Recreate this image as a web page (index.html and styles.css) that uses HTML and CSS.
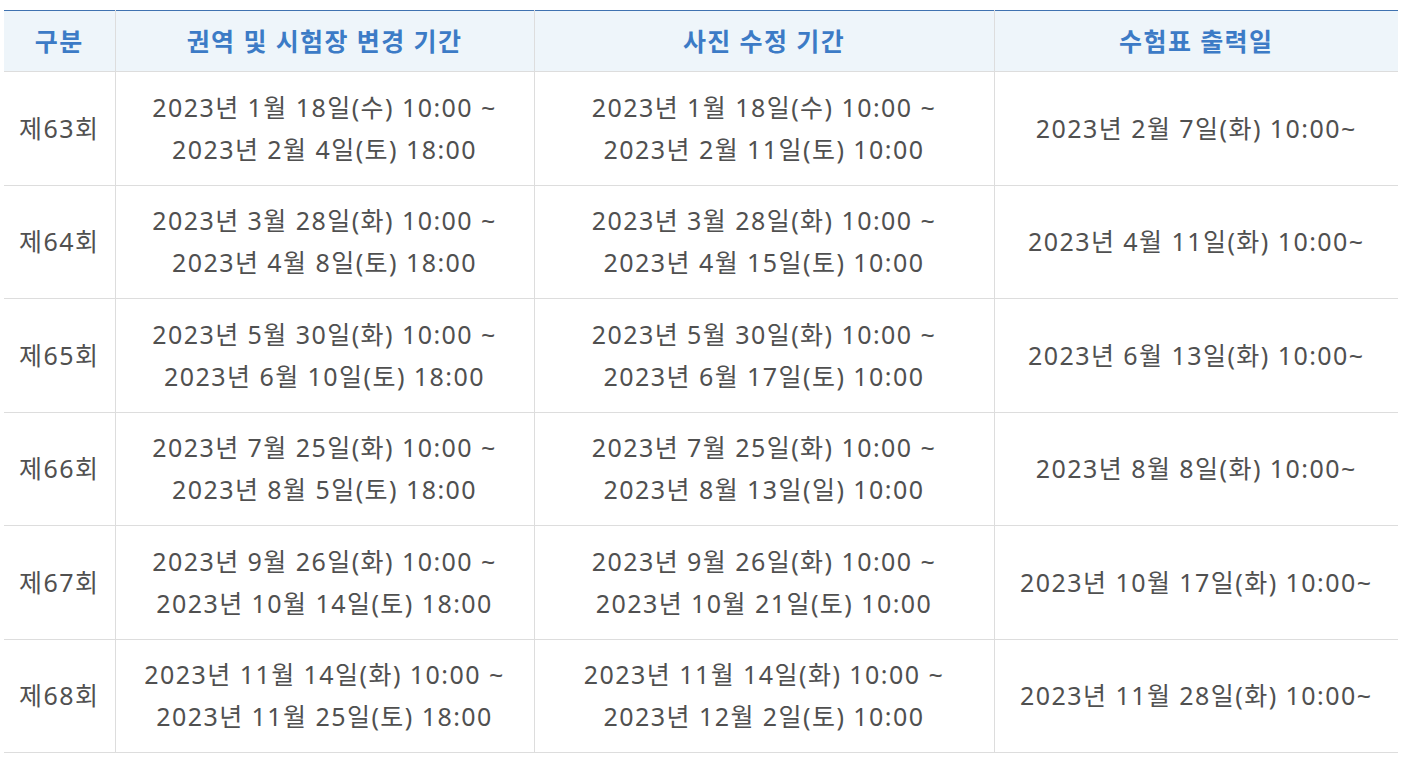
FILE: index.html
```html
<!DOCTYPE html>
<html lang="ko">
<head>
<meta charset="utf-8">
<title>시험 일정</title>
<link rel="stylesheet" href="styles.css">
</head>
<body>
<div class="wrap">
<table class="sched">
<colgroup>
<col class="c1"><col class="c2"><col class="c3"><col class="c4">
</colgroup>
<thead>
<tr><th>구분</th><th>권역 및 시험장 변경 기간</th><th>사진 수정 기간</th><th>수험표 출력일</th></tr>
</thead>
<tbody>
<tr><td>제63회</td><td>2023년 1월 18일(수) 10:00 ~<br>2023년 2월 4일(토) 18:00</td><td>2023년 1월 18일(수) 10:00 ~<br>2023년 2월 11일(토) 10:00</td><td>2023년 2월 7일(화) 10:00~</td></tr>
<tr><td>제64회</td><td>2023년 3월 28일(화) 10:00 ~<br>2023년 4월 8일(토) 18:00</td><td>2023년 3월 28일(화) 10:00 ~<br>2023년 4월 15일(토) 10:00</td><td>2023년 4월 11일(화) 10:00~</td></tr>
<tr><td>제65회</td><td>2023년 5월 30일(화) 10:00 ~<br>2023년 6월 10일(토) 18:00</td><td>2023년 5월 30일(화) 10:00 ~<br>2023년 6월 17일(토) 10:00</td><td>2023년 6월 13일(화) 10:00~</td></tr>
<tr><td>제66회</td><td>2023년 7월 25일(화) 10:00 ~<br>2023년 8월 5일(토) 18:00</td><td>2023년 7월 25일(화) 10:00 ~<br>2023년 8월 13일(일) 10:00</td><td>2023년 8월 8일(화) 10:00~</td></tr>
<tr><td>제67회</td><td>2023년 9월 26일(화) 10:00 ~<br>2023년 10월 14일(토) 18:00</td><td>2023년 9월 26일(화) 10:00 ~<br>2023년 10월 21일(토) 10:00</td><td>2023년 10월 17일(화) 10:00~</td></tr>
<tr><td>제68회</td><td>2023년 11월 14일(화) 10:00 ~<br>2023년 11월 25일(토) 18:00</td><td>2023년 11월 14일(화) 10:00 ~<br>2023년 12월 2일(토) 10:00</td><td>2023년 11월 28일(화) 10:00~</td></tr>
</tbody>
</table>
</div>
</body>
</html>
```
FILE: styles.css
```css
html, body {
  margin: 0;
  padding: 0;
  background: #fff;
}
.wrap {
  padding: 10px 18px 0 4px;
}
.sched {
  width: 1394px;
  border-collapse: collapse;
  table-layout: fixed;
  font-family: "Noto Sans", "Noto Sans CJK KR", sans-serif;
  font-size: 25px;
  letter-spacing: 1.45px;
  color: #505050;
  border-top: 1px solid #3f72b0;
}
.c1 { width: 111px; }
.c2 { width: 419px; }
.c3 { width: 460px; }
.c4 { width: 404px; }
.sched th {
  background: #eef5fa;
  color: #3c7bc6;
  font-weight: 700;
  letter-spacing: 1.4px;
  height: 60px;
  padding: 0;
  text-align: center;
  border: 1px solid #ddd;
  border-top: none;
  line-height: 32px;
}
.sched td {
  height: 110px;
  padding: 0 0 2px;
  text-align: center;
  border: 1px solid #ddd;
  line-height: 42px;
}
.sched tbody tr:nth-child(odd) td { height: 111px; }
.sched tr > :first-child { border-left: none; }
.sched tr > :last-child { border-right: none; }
```
